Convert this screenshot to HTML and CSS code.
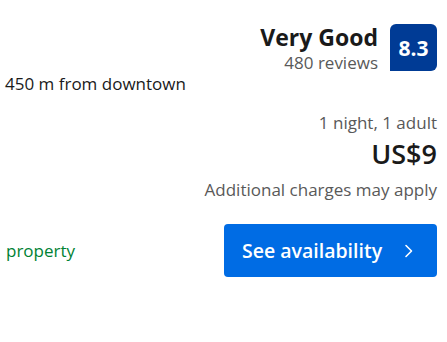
FILE: index.html
```html
<!DOCTYPE html>
<html lang="en">
<head>
    <meta charset="UTF-8">
    <meta name="viewport" content="width=device-width, initial-scale=1.0">
    <title>Property card</title>
    <link rel="stylesheet" href="styles.css">
</head>
<body>
    <div class="card">
        <div class="review-row">
            <div class="review-text">
                <div class="review-title">Very Good</div>
                <div class="review-count">480 reviews</div>
            </div>
            <div class="score">8.3</div>
        </div>
        <div class="distance">450 m from downtown</div>
        <div class="price-block">
            <div class="stay">1 night, 1 adult</div>
            <div class="price">US$9</div>
            <div class="charges">Additional charges may apply</div>
        </div>
        <div class="bottom-row">
            <div class="perk">property</div>
            <a class="cta" href="#">
                <span>See availability</span>
                <svg width="10" height="14" viewBox="0 0 10 14"><path d="M2 1.5 L7.5 7 L2 12.5" fill="none" stroke="#fff" stroke-width="1.6" stroke-linecap="round" stroke-linejoin="round"/></svg>
            </a>
        </div>
    </div>
</body>
</html>
```

FILE: styles.css
```css
body {
    margin: 0;
    padding: 0;
    background: #ffffff;
    font-family: "Open Sans", Arial, sans-serif;
    color: #1a1a1a;
}

.card {
    display: flex;
    flex-direction: column;
    padding: 22px 10px 0 5px;
}

.review-row {
    display: flex;
    justify-content: flex-end;
    align-items: flex-start;
    gap: 12px;
}

.review-text {
    text-align: right;
}

.review-title {
    font-size: 23px;
    font-weight: 700;
    line-height: 31px;
}

.review-count {
    font-size: 17px;
    line-height: 24px;
    margin-top: -2px;
    color: #595959;
}

.score {
    width: 47px;
    height: 47px;
    margin-top: 2px;
    display: flex;
    align-items: center;
    justify-content: center;
    background: #003b95;
    color: #ffffff;
    font-size: 21px;
    font-weight: 700;
    border-radius: 6px 6px 6px 0;
}

.distance {
    font-size: 17px;
    line-height: 22px;
    margin-top: -2px;
}

.price-block {
    text-align: right;
    margin-top: 16px;
}

.stay,
.charges {
    font-size: 17px;
    line-height: 24px;
    color: #595959;
}

.price {
    font-size: 27px;
    font-weight: 600;
    line-height: 36px;
    margin: 1px 0 6px;
}

.bottom-row {
    display: flex;
    justify-content: space-between;
    align-items: center;
    margin-top: 22px;
}

.perk {
    font-size: 17px;
    color: #008234;
    padding-left: 1px;
}

.cta {
    display: flex;
    align-items: center;
    justify-content: space-between;
    width: 213px;
    height: 53px;
    box-sizing: border-box;
    padding: 0 23px 0 18px;
    background: #006ce4;
    color: #ffffff;
    border-radius: 4px;
    text-decoration: none;
    font-size: 19.5px;
    font-weight: 600;
}
```
